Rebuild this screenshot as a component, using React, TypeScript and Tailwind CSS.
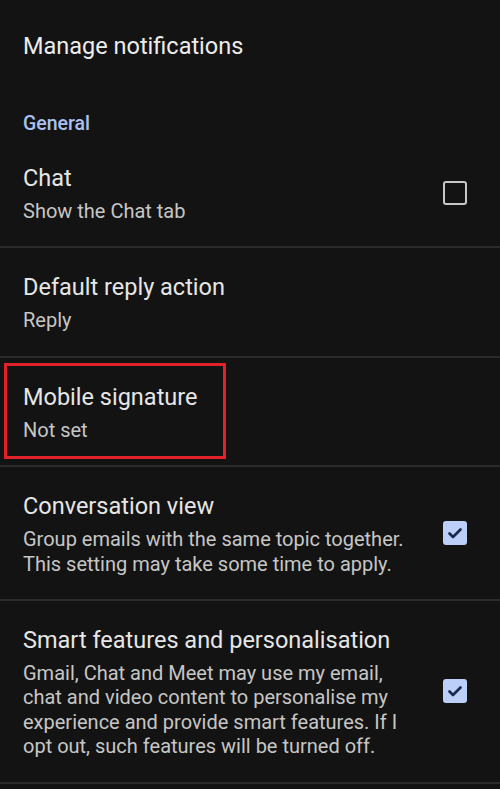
import React from "react";

function CheckBox({ checked }: { checked: boolean }) {
  if (checked) {
    return (
      <div className="w-[24px] h-[24px] rounded-[3px] bg-[#bccff8] flex items-center justify-center">
        <svg width="24" height="24" viewBox="0 0 24 24" fill="none">
          <path d="M6.5 12.5L10 16L17.5 8.5" stroke="#1a2a4c" strokeWidth="2.7" strokeLinecap="round" strokeLinejoin="round" />
        </svg>
      </div>
    );
  }
  return <div className="w-[24px] h-[24px] rounded-[3px] border-[2.5px] border-[#c7c7c9]" />;
}

function Row({
  title,
  sub,
  check,
  highlight,
}: {
  title: string;
  sub: React.ReactNode;
  check?: boolean;
  highlight?: boolean;
}) {
  return (
    <div className="relative flex items-center pl-[23px] pr-[33px] py-[23px] border-b-2 border-[#2b2b2b]">
      {highlight && (
        <div className="absolute left-[4px] top-[5px] w-[222px] h-[96px] border-[3px] border-[#e3212a]" />
      )}
      <div className="flex-1">
        <div className="text-[23.5px] leading-[32px] text-[#e6e6e6]">{title}</div>
        <div className="text-[20px] leading-[24.4px] text-[#c6c6c6] mt-[5px]">{sub}</div>
      </div>
      {check !== undefined && (
        <div className="ml-4">
          <CheckBox checked={check} />
        </div>
      )}
    </div>
  );
}

export default function App() {
  return (
    <div className="w-[500px] h-[789px] bg-[#131313] overflow-hidden" style={{ fontFamily: "Roboto, 'Noto Sans', sans-serif" }}>
      <div className="pl-[23px] pt-[30px] text-[23.5px] leading-[32px] text-[#ececec]">Manage notifications</div>
      <div className="pl-[23px] mt-[50px] mb-[3px] text-[19.5px] leading-[24px] font-medium text-[#a9c2f2]">General</div>
      <Row title="Chat" sub="Show the Chat tab" check={false} />
      <Row title="Default reply action" sub="Reply" />
      <Row title="Mobile signature" sub="Not set" highlight />
      <Row
        title="Conversation view"
        sub={<>Group emails with the same topic together.<br />This setting may take some time to apply.</>}
        check={true}
      />
      <Row
        title="Smart features and personalisation"
        sub={<>Gmail, Chat and Meet may use my email,<br />chat and video content to personalise my<br />experience and provide smart features. If I<br />opt out, such features will be turned off.</>}
        check={true}
      />
    </div>
  );
}
